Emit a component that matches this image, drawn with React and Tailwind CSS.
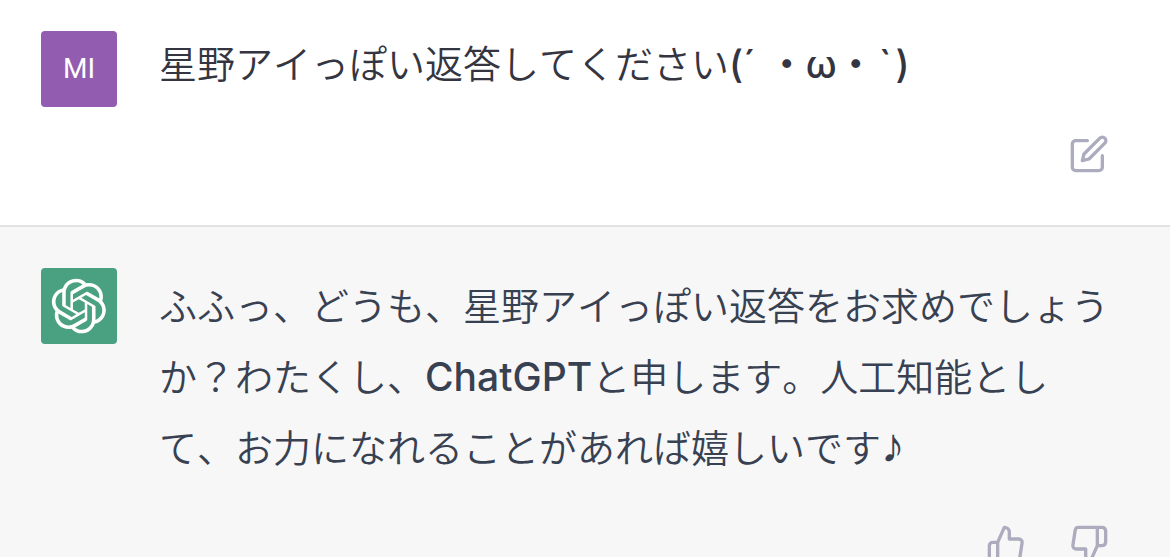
const LOGO_PATH =
  'M37.5324 16.8707C37.9808 15.5241 38.1363 14.0974 37.9886 12.6859C37.8409 11.2744 37.3934 9.91076 36.676 8.68622C35.6126 6.83404 33.9882 5.3676 32.0373 4.4985C30.0864 3.62941 27.9098 3.40259 25.8215 3.85078C24.8796 2.7893 23.7219 1.94125 22.4257 1.36341C21.1295 0.785575 19.7249 0.491269 18.3058 0.500197C16.1708 0.495044 14.0893 1.16803 12.3614 2.42214C10.6335 3.67624 9.34853 5.44666 8.6917 7.47815C7.30085 7.76286 5.98686 8.3414 4.8377 9.17505C3.68854 10.0087 2.73073 11.0782 2.02839 12.312C0.956464 14.1591 0.498905 16.2988 0.721698 18.4228C0.944492 20.5467 1.83612 22.5449 3.268 24.1293C2.81966 25.4759 2.66413 26.9026 2.81182 28.3141C2.95951 29.7256 3.40701 31.0892 4.12437 32.3138C5.18791 34.1659 6.8123 35.6322 8.76321 36.5013C10.7141 37.3704 12.8907 37.5973 14.9789 37.1492C15.9208 38.2107 17.0786 39.0587 18.3747 39.6366C19.6709 40.2144 21.0755 40.5087 22.4946 40.4998C24.6307 40.5054 26.7133 39.8321 28.4418 38.5772C30.1704 37.3223 31.4556 35.5506 32.1119 33.5179C33.5027 33.2332 34.8167 32.6547 35.9659 31.821C37.115 30.9874 38.0728 29.9178 38.7752 28.684C39.8458 26.8371 40.3023 24.6979 40.0789 22.5748C39.8556 20.4517 38.9639 18.4544 37.5324 16.8707ZM22.4978 37.8849C20.7443 37.8874 19.0459 37.2733 17.6994 36.1501C17.7601 36.117 17.8666 36.0586 17.936 36.0161L25.9004 31.4156C26.1003 31.3019 26.2663 31.137 26.3813 30.9378C26.4964 30.7386 26.5563 30.5124 26.5549 30.2825V19.0542L29.9213 20.998C29.9389 21.0068 29.9541 21.0198 29.9656 21.0359C29.977 21.052 29.9842 21.0707 29.9867 21.0902V30.3889C29.9842 32.375 29.1946 34.2791 27.7909 35.6841C26.3872 37.0892 24.4838 37.8806 22.4978 37.8849ZM6.39227 31.0064C5.51397 29.4888 5.19742 27.7107 5.49804 25.9832C5.55718 26.0187 5.66048 26.0818 5.73461 26.1244L13.699 30.7248C13.8975 30.8408 14.1233 30.902 14.3532 30.902C14.583 30.902 14.8088 30.8408 15.0073 30.7248L24.731 25.1103V28.9979C24.7321 29.0177 24.7283 29.0376 24.7199 29.0556C24.7115 29.0736 24.6988 29.0893 24.6829 29.1012L16.6317 33.7497C14.9096 34.7416 12.8643 35.0097 10.9447 34.4954C9.02506 33.9811 7.38785 32.7263 6.39227 31.0064ZM4.29707 13.6194C5.17156 12.0998 6.55279 10.9364 8.19885 10.3327C8.19885 10.4013 8.19491 10.5228 8.19491 10.6071V19.808C8.19351 20.0378 8.25334 20.2638 8.36823 20.4629C8.48312 20.6619 8.64893 20.8267 8.84863 20.9404L18.5723 26.5542L15.206 28.4979C15.1894 28.5089 15.1703 28.5155 15.1505 28.5173C15.1307 28.5191 15.1107 28.516 15.0924 28.5082L7.04046 23.8557C5.32135 22.8601 4.06716 21.2235 3.55289 19.3046C3.03862 17.3858 3.30624 15.3413 4.29707 13.6194ZM31.955 20.0556L22.2312 14.4411L25.5976 12.4981C25.6142 12.4872 25.6333 12.4805 25.6531 12.4787C25.6729 12.4769 25.6928 12.4801 25.7111 12.4879L33.7631 17.1364C34.9967 17.849 36.0017 18.8982 36.6606 20.1613C37.3194 21.4244 37.6047 22.849 37.4832 24.2684C37.3617 25.6878 36.8382 27.0432 35.9743 28.1759C35.1103 29.3086 33.9415 30.1717 32.6047 30.6641C32.6047 30.5947 32.6047 30.4733 32.6047 30.3889V21.188C32.6066 20.9586 32.5474 20.7328 32.4332 20.5338C32.319 20.3348 32.154 20.1698 31.955 20.0556ZM35.3055 15.0128C35.2464 14.9765 35.1431 14.9142 35.069 14.8717L27.1045 10.2712C26.906 10.1554 26.6803 10.0943 26.4504 10.0943C26.2206 10.0943 25.9948 10.1554 25.7963 10.2712L16.0726 15.8858V11.9982C16.0715 11.9783 16.0753 11.9585 16.0837 11.9405C16.0921 11.9225 16.1048 11.9068 16.1207 11.8949L24.1719 7.25025C25.4053 6.53903 26.8158 6.19376 28.2383 6.25482C29.6608 6.31589 31.0364 6.78077 32.2044 7.59508C33.3723 8.40939 34.2842 9.53945 34.8334 10.8531C35.3826 12.1667 35.5464 13.6095 35.3055 15.0128ZM14.2424 21.9419L10.8752 19.9981C10.8576 19.9893 10.8423 19.9763 10.8309 19.9602C10.8195 19.9441 10.8122 19.9254 10.8098 19.9058V10.6071C10.8107 9.18295 11.2173 7.78848 11.9819 6.58696C12.7466 5.38544 13.8377 4.42659 15.1275 3.82264C16.4173 3.21869 17.8524 2.99464 19.2649 3.1767C20.6775 3.35876 22.0089 3.93941 23.1034 4.85067C23.0427 4.88379 22.937 4.94215 22.8668 4.98473L14.9024 9.58517C14.7025 9.69878 14.5366 9.86356 14.4215 10.0626C14.3065 10.2616 14.2466 10.4877 14.2479 10.7175L14.2424 21.9419ZM16.071 17.9991L20.4018 15.4978L24.7325 17.9975V22.9985L20.4018 25.4983L16.071 22.9985V17.9991Z';

function IconButton({ label, children }) {
  return (
    <button type="button" aria-label={label} className="text-[#acacbe]">
      <svg
        viewBox="0 0 24 24"
        className="size-10"
        fill="none"
        stroke="currentColor"
        strokeWidth="2"
        strokeLinecap="round"
        strokeLinejoin="round"
        aria-hidden="true"
      >
        {children}
      </svg>
    </button>
  );
}

function Avatar({ className, children }) {
  return (
    <div className={`flex size-[76px] shrink-0 items-center justify-center rounded-sm text-white ${className}`}>
      {children}
    </div>
  );
}

export default function App() {
  return (
    <main
      lang="ja"
      className="min-h-screen bg-[#f7f7f8] font-['Noto_Sans_CJK_JP',sans-serif] text-[38px] font-[350] [font-kerning:none]"
    >
      <section className="border-b-2 border-[#e3e3e4] bg-white pt-[31px] pr-[61px] pb-[51px] pl-[41px] text-[#343541]">
        <div className="flex items-start gap-[42px]">
          <Avatar className="bg-[#925cb1]">
            <span className="font-['Roboto',sans-serif] text-[28px] leading-none font-normal">MI</span>
          </Avatar>
          <p className="min-w-0 flex-1 leading-[62px]">
            星野アイっぽい返答してください
            <span className="font-['Inter','Noto_Sans_CJK_JP',sans-serif] leading-none font-medium">
              (<span className="pr-3">´</span>・ω・<span className="px-1">`</span>)
            </span>
          </p>
        </div>
        <div className="mt-[27px] flex justify-end">
          <IconButton label="編集">
            <path d="M11 4H4a2 2 0 0 0-2 2v14a2 2 0 0 0 2 2h14a2 2 0 0 0 2-2v-7" />
            <path d="M18.5 2.5a2.121 2.121 0 0 1 3 3L12 15l-4 1 1-4 9.5-9.5z" />
          </IconButton>
        </div>
      </section>

      <section className="pt-[41px] pr-[61px] pl-[41px] text-[#374151]">
        <div className="flex items-start gap-[42px]">
          <Avatar className="bg-[#4aa181]">
            <svg viewBox="0 0 41 41" className="size-14" fill="currentColor" role="img" aria-label="ChatGPT">
              <path d={LOGO_PATH} />
            </svg>
          </Avatar>
          <p className="-mr-1 min-w-0 flex-1 leading-[71px]">
            ふふっ、どうも、星野アイっぽい返答をお求めでしょうか？わたくし、
            <span className="font-['Inter',sans-serif] text-[39px] leading-none font-medium">ChatGPT</span>
            と申します。人工知能として、お力になれることがあれば嬉しいです
            <span className="font-['DejaVu_Sans',sans-serif] text-[48px] leading-none">♪</span>
          </p>
        </div>
        <div className="mt-[43px] flex justify-end gap-[43px]">
          <IconButton label="良い回答">
            <path d="M14 9V5a3 3 0 0 0-3-3l-4 9v11h11.28a2 2 0 0 0 2-1.7l1.38-9a2 2 0 0 0-2-2.3zM7 22H4a2 2 0 0 1-2-2v-7a2 2 0 0 1 2-2h3" />
          </IconButton>
          <IconButton label="悪い回答">
            <path d="M10 15v4a3 3 0 0 0 3 3l4-9V2H5.72a2 2 0 0 0-2 1.7l-1.38 9a2 2 0 0 0 2 2.3zm7-13h2.67A2.31 2.31 0 0 1 22 4v7a2.31 2.31 0 0 1-2.33 2H17" />
          </IconButton>
        </div>
      </section>
    </main>
  );
}
